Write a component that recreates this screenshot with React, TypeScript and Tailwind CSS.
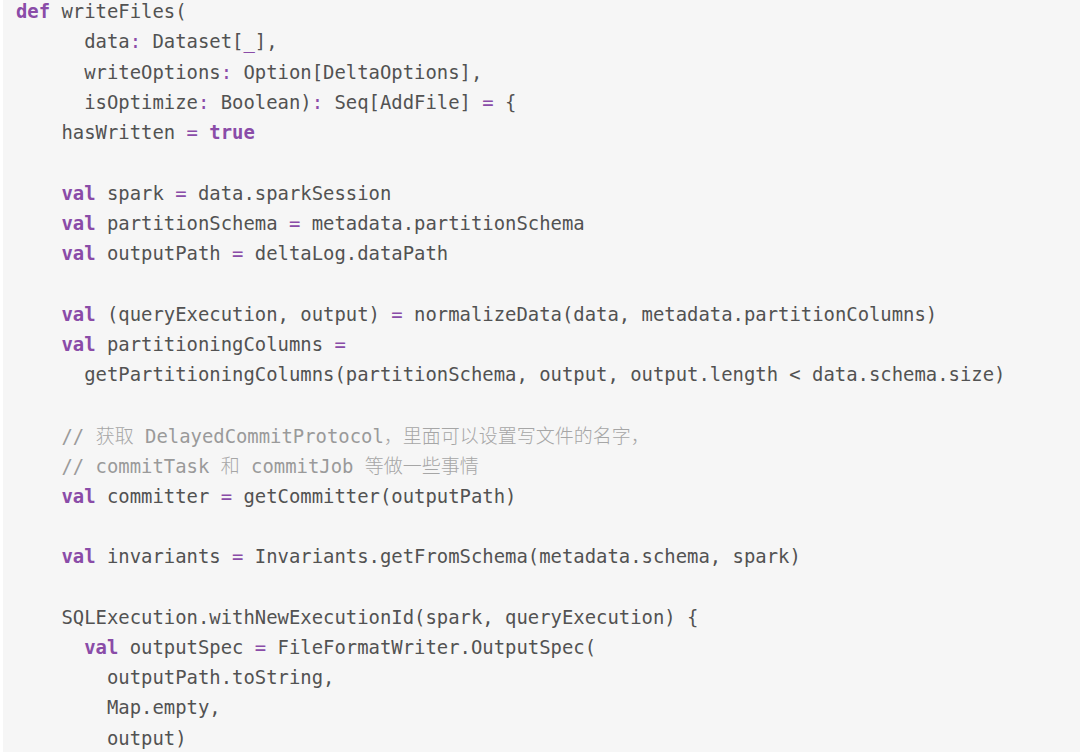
type Seg = { t: string; k?: 'kw' | 'op' | 'cm' | 'cj' }

const kw = (t: string): Seg => ({ t, k: 'kw' })
const op = (t: string): Seg => ({ t, k: 'op' })
const cm = (t: string): Seg => ({ t, k: 'cm' })
const cj = (t: string): Seg => ({ t, k: 'cj' })
const tx = (t: string): Seg => ({ t })

const lines: Seg[][] = [
  [kw('def'), tx(' writeFiles(')],
  [tx('      data'), op(':'), tx(' Dataset['), op('_'), tx('],')],
  [tx('      writeOptions'), op(':'), tx(' Option[DeltaOptions],')],
  [tx('      isOptimize'), op(':'), tx(' Boolean)'), op(':'), tx(' Seq[AddFile] '), op('='), tx(' {')],
  [tx('    hasWritten '), op('='), tx(' '), kw('true')],
  [],
  [tx('    '), kw('val'), tx(' spark '), op('='), tx(' data.sparkSession')],
  [tx('    '), kw('val'), tx(' partitionSchema '), op('='), tx(' metadata.partitionSchema')],
  [tx('    '), kw('val'), tx(' outputPath '), op('='), tx(' deltaLog.dataPath')],
  [],
  [tx('    '), kw('val'), tx(' (queryExecution, output) '), op('='), tx(' normalizeData(data, metadata.partitionColumns)')],
  [tx('    '), kw('val'), tx(' partitioningColumns '), op('=')],
  [tx('      getPartitioningColumns(partitionSchema, output, output.length < data.schema.size)')],
  [],
  [tx('    '), cm('// '), cj('获取'), cm(' DelayedCommitProtocol'), cj('，里面可以设置写文件的名字，')],
  [tx('    '), cm('// commitTask '), cj('和'), cm(' commitJob '), cj('等做一些事情')],
  [tx('    '), kw('val'), tx(' committer '), op('='), tx(' getCommitter(outputPath)')],
  [],
  [tx('    '), kw('val'), tx(' invariants '), op('='), tx(' Invariants.getFromSchema(metadata.schema, spark)')],
  [],
  [tx('    SQLExecution.withNewExecutionId(spark, queryExecution) {')],
  [tx('      '), kw('val'), tx(' outputSpec '), op('='), tx(' FileFormatWriter.OutputSpec(')],
  [tx('        outputPath.toString,')],
  [tx('        Map.empty,')],
  [tx('        output)')],
]

function Token({ s }: { s: Seg }) {
  if (s.k === 'kw') return <span className="font-bold text-[#8a4ca8]">{s.t}</span>
  if (s.k === 'op') return <span className="text-[#8a4ca8]">{s.t}</span>
  if (s.k === 'cm') return <span className="text-[#9a9a9a]">{s.t}</span>
  if (s.k === 'cj')
    return (
      <span className="text-[19px] font-light text-[#a6a6a6] [font-family:'Noto_Sans_CJK_SC',sans-serif]">
        {s.t}
      </span>
    )
  return <span>{s.t}</span>
}

export default function App() {
  return (
    <div className="h-[754px] w-[1080px] overflow-hidden bg-white">
      <div className="ml-[3px] h-[752px] overflow-hidden bg-[#f6f6f6] pl-[13px]">
        <pre className="-mt-[4px] whitespace-pre text-[18.9px] leading-[30.29px] text-[#525252] [font-family:'DejaVu_Sans_Mono','Noto_Sans_CJK_SC',monospace]">
          {lines.map((line, i) => (
            <div key={i} className="h-[30.29px]">
              {line.map((s, j) => (
                <Token key={j} s={s} />
              ))}
            </div>
          ))}
        </pre>
      </div>
    </div>
  )
}
